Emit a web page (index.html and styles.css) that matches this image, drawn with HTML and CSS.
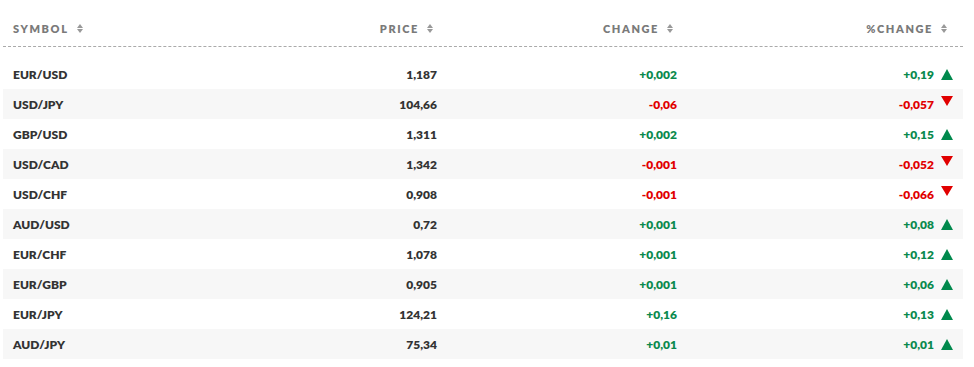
FILE: index.html
```html
<!DOCTYPE html>
<html lang="en">
<head>
    <meta charset="UTF-8">
    <title>Currencies</title>
    <link rel="stylesheet" href="styles.css">
</head>
<body>
    <div class="quotes">
        <div class="quotes-head">
            <div class="col col-symbol">SYMBOL <span class="sort"><i class="up"></i><i class="down"></i></span></div>
            <div class="col col-price">PRICE <span class="sort"><i class="up"></i><i class="down"></i></span></div>
            <div class="col col-change">CHANGE <span class="sort"><i class="up"></i><i class="down"></i></span></div>
            <div class="col col-pct">%CHANGE <span class="sort"><i class="up"></i><i class="down"></i></span></div>
        </div>
        <div class="quotes-body">
            <div class="row">
                <div class="col col-symbol">EUR/USD</div>
                <div class="col col-price">1,187</div>
                <div class="col col-change pos">+0,002</div>
                <div class="col col-pct pos">+0,19 <span class="tri tri-up"></span></div>
            </div>
            <div class="row">
                <div class="col col-symbol">USD/JPY</div>
                <div class="col col-price">104,66</div>
                <div class="col col-change neg">-0,06</div>
                <div class="col col-pct neg">-0,057 <span class="tri tri-down"></span></div>
            </div>
            <div class="row">
                <div class="col col-symbol">GBP/USD</div>
                <div class="col col-price">1,311</div>
                <div class="col col-change pos">+0,002</div>
                <div class="col col-pct pos">+0,15 <span class="tri tri-up"></span></div>
            </div>
            <div class="row">
                <div class="col col-symbol">USD/CAD</div>
                <div class="col col-price">1,342</div>
                <div class="col col-change neg">-0,001</div>
                <div class="col col-pct neg">-0,052 <span class="tri tri-down"></span></div>
            </div>
            <div class="row">
                <div class="col col-symbol">USD/CHF</div>
                <div class="col col-price">0,908</div>
                <div class="col col-change neg">-0,001</div>
                <div class="col col-pct neg">-0,066 <span class="tri tri-down"></span></div>
            </div>
            <div class="row">
                <div class="col col-symbol">AUD/USD</div>
                <div class="col col-price">0,72</div>
                <div class="col col-change pos">+0,001</div>
                <div class="col col-pct pos">+0,08 <span class="tri tri-up"></span></div>
            </div>
            <div class="row">
                <div class="col col-symbol">EUR/CHF</div>
                <div class="col col-price">1,078</div>
                <div class="col col-change pos">+0,001</div>
                <div class="col col-pct pos">+0,12 <span class="tri tri-up"></span></div>
            </div>
            <div class="row">
                <div class="col col-symbol">EUR/GBP</div>
                <div class="col col-price">0,905</div>
                <div class="col col-change pos">+0,001</div>
                <div class="col col-pct pos">+0,06 <span class="tri tri-up"></span></div>
            </div>
            <div class="row">
                <div class="col col-symbol">EUR/JPY</div>
                <div class="col col-price">124,21</div>
                <div class="col col-change pos">+0,16</div>
                <div class="col col-pct pos">+0,13 <span class="tri tri-up"></span></div>
            </div>
            <div class="row">
                <div class="col col-symbol">AUD/JPY</div>
                <div class="col col-price">75,34</div>
                <div class="col col-change pos">+0,01</div>
                <div class="col col-pct pos">+0,01 <span class="tri tri-up"></span></div>
            </div>
        </div>
    </div>
</body>
</html>
```

FILE: styles.css
```css
body {
    margin: 0;
    padding: 0;
    background: #ffffff;
    font-family: 'Lato', 'Liberation Sans', sans-serif;
    color: #333;
}

.quotes {
    width: 960px;
    margin-left: 3px;
}

.quotes-head {
    display: flex;
    align-items: center;
    height: 36px;
    margin-top: 10px;
    margin-bottom: 12px;
    border-bottom: 1px dashed #aaa;
    font-size: 11px;
    font-weight: 800;
    letter-spacing: 1.6px;
    color: #7a7a7a;
}

.col {
    box-sizing: border-box;
    display: flex;
    align-items: center;
}

.col-symbol {
    width: 200px;
    padding-left: 10px;
}

.col-price {
    width: 234px;
    justify-content: flex-end;
}

.col-change {
    width: 240px;
    justify-content: flex-end;
}

.col-pct {
    flex: 1;
    justify-content: flex-end;
    padding-right: 10px;
}

.quotes-head .col-price,
.quotes-head .col-change {
    padding-right: 4px;
}

.quotes-head .col-pct {
    padding-right: 16px;
}

.sort {
    display: inline-flex;
    flex-direction: column;
    gap: 1px;
    margin-left: 8px;
}

.sort i {
    display: block;
    width: 0;
    height: 0;
    border-left: 3px solid transparent;
    border-right: 3px solid transparent;
}

.sort .up {
    border-bottom: 4px solid #999;
}

.sort .down {
    border-top: 4px solid #999;
}

.row {
    display: flex;
    align-items: center;
    height: 30px;
    font-size: 12px;
    font-weight: 800;
    color: #333;
}

.row:nth-child(even) {
    background: #f7f7f7;
}

.pos {
    color: #0a8a4e;
}

.neg {
    color: #e10000;
}

.tri {
    display: inline-block;
    width: 0;
    height: 0;
    margin-left: 7px;
    border-left: 6px solid transparent;
    border-right: 6px solid transparent;
}

.tri-up {
    border-bottom: 11px solid #00894d;
}

.tri-down {
    border-top: 10px solid #e10000;
    margin-top: -7px;
}
```
